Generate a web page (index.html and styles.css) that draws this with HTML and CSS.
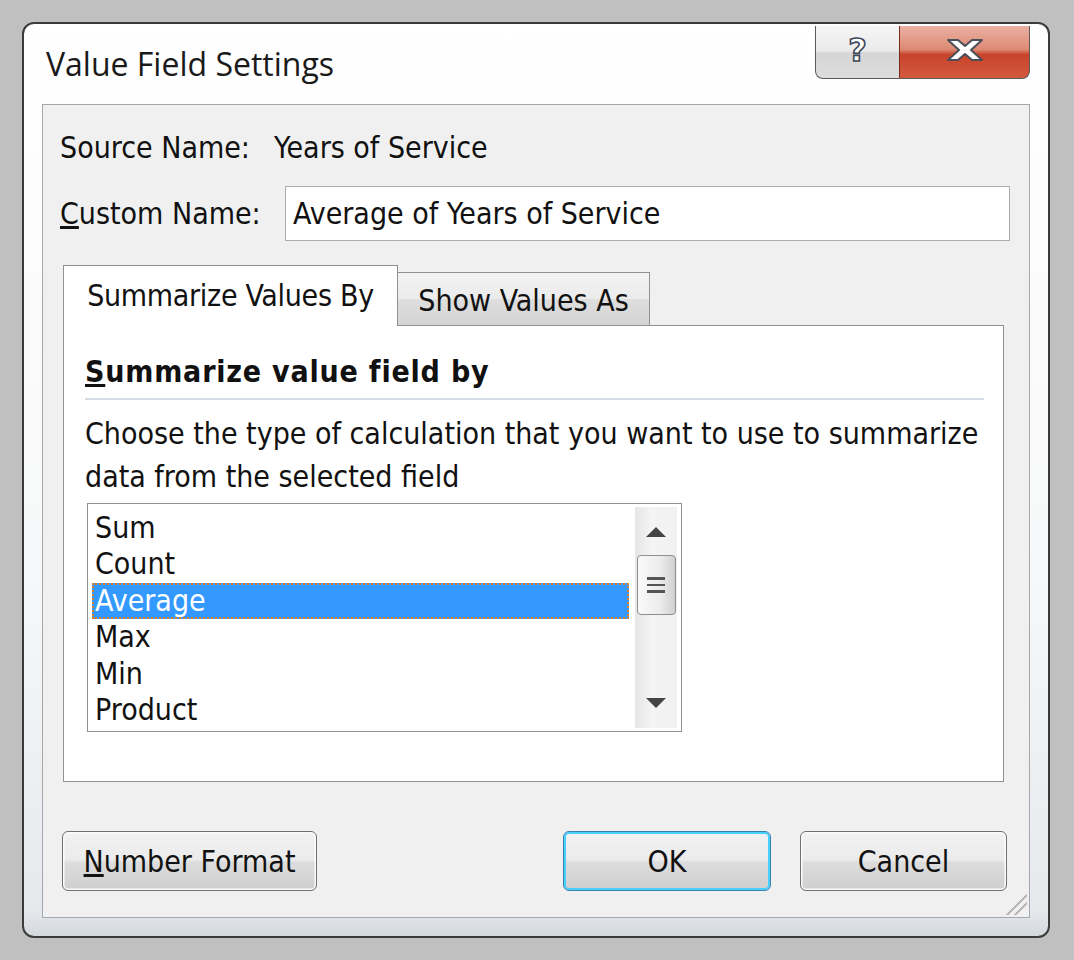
FILE: index.html
```html
<!DOCTYPE html>
<html>
<head>
<meta charset="utf-8">
<link rel="stylesheet" href="styles.css">
</head>
<body>
<div class="window">
  <div class="titlebar">
    <div class="title">Value Field Settings</div>
    <div class="caption">
      <div class="cap-btn help"><span class="help-glyph">?</span></div>
      <div class="cap-btn close">
        <svg width="44" height="26" viewBox="0 0 44 26"><path d="M5 3 L15 3 L22 9 L29 3 L39 3 L28 13 L39 23 L29 23 L22 17 L15 23 L5 23 L16 13 Z" fill="#ffffff" stroke="#4a4f5a" stroke-width="2" stroke-linejoin="round"/></svg>
      </div>
    </div>
  </div>
  <div class="client">
    <div class="row row-source">
      <span class="lbl lbl-source">Source Name:</span>
      <span class="val">Years of Service</span>
    </div>
    <div class="row row-custom">
      <span class="lbl lbl-custom"><u>C</u>ustom Name:</span>
      <div class="textbox">Average of Years of Service</div>
    </div>
    <div class="tabs">
      <div class="tab active">Summarize Values By</div>
      <div class="tab inactive">Show Values As</div>
    </div>
    <div class="panel">
      <div class="group-title"><u>S</u>ummarize value field by</div>
      <div class="sep"></div>
      <div class="desc">Choose the type of calculation that you want to use to summarize<br>data from the selected field</div>
      <div class="listbox">
        <div class="items">
          <div class="item">Sum</div>
          <div class="item">Count</div>
          <div class="item selected">Average</div>
          <div class="item">Max</div>
          <div class="item">Min</div>
          <div class="item">Product</div>
        </div>
        <div class="scrollbar">
          <div class="arrow up"></div>
          <div class="thumb"><span></span><span></span><span></span></div>
          <div class="track"></div>
          <div class="arrow down"></div>
        </div>
      </div>
    </div>
    <div class="buttons">
      <div class="btn btn-numfmt"><u>N</u>umber Format</div>
      <div class="spacer"></div>
      <div class="btn btn-ok">OK</div>
      <div class="btn btn-cancel">Cancel</div>
    </div>
    <div class="grip"></div>
  </div>
</div>
</body>
</html>
```
FILE: styles.css
```css
* { box-sizing: border-box; }
html, body { margin: 0; padding: 0; }
body {
  width: 1074px;
  height: 960px;
  background: #c0c0c0;
  padding: 22px 0 0 22px;
  font-family: "DejaVu Sans Condensed", "DejaVu Sans", sans-serif;
  font-stretch: condensed;
  color: #111;
}
.window {
  width: 1028px;
  height: 916px;
  border: 2px solid #3b3b3b;
  border-radius: 12px;
  background: linear-gradient(180deg, #ffffff 0%, #f7f8f9 60%, #e6e9ec 97%, #d4d9de 100%);
  display: flex;
  flex-direction: column;
  padding: 0 18px;
}
.titlebar {
  height: 80px;
  display: flex;
  justify-content: space-between;
  align-items: flex-start;
}
.title {
  font-family: "Open Sans", "Noto Sans", sans-serif;
  font-stretch: normal;
  font-size: 32px;
  color: #1a1a1a;
  margin-top: 18px;
  margin-left: 4px;
  letter-spacing: 0;
}
.caption {
  display: flex;
  margin-top: 2px;
  margin-right: 0px;
}
.cap-btn {
  height: 53px;
  border: 1.5px solid #5a5a5a;
  border-top: none;
  display: flex;
  align-items: center;
  justify-content: center;
}
.help {
  width: 84px;
  border-radius: 0 0 0 8px;
  border-right: none;
  background: linear-gradient(180deg, #f6f6f6 0%, #eaeaea 48%, #d6d6d6 52%, #dcdcdc 100%);
}
.help-glyph {
  font-family: "DejaVu Sans", sans-serif;
  font-stretch: normal;
  font-weight: bold;
  font-size: 32px;
  color: #fff;
  -webkit-text-stroke: 1.6px #3c4656;
  line-height: 1;
  margin-top: -4px;
}
.close {
  width: 131px;
  border-radius: 0 0 8px 0;
  border-left: 1.5px solid #7a2a1a;
  background: linear-gradient(180deg, #eab1a3 0%, #de8a74 45%, #c8432a 55%, #d35a3f 100%);
}
.close svg { margin-top: -4px; }
.client {
  flex: 1;
  margin-bottom: 18px;
  border: 1px solid #a4a8ad;
  background: #f0f0f0;
  display: flex;
  flex-direction: column;
  padding: 0 0 0 17px;
  font-size: 30px;
  position: relative;
}
.row { display: flex; align-items: center; }
.row-source { height: 40px; margin-top: 22px; }
.lbl-source { width: 214px; }
.row-custom { height: 55px; margin-top: 19px; }
.lbl-custom { width: 225px; }
.textbox {
  width: 725px;
  height: 55px;
  background: #fff;
  border: 1.5px solid #abadb3;
  padding-left: 7px;
  display: flex;
  align-items: center;
}
.tabs {
  display: flex;
  align-items: flex-end;
  margin-top: 24px;
  margin-left: 3px;
  height: 61px;
  position: relative;
  z-index: 1;
}
.tab {
  display: flex;
  align-items: center;
  justify-content: center;
  border: 1.5px solid #8e9296;
  border-bottom: none;
}
.tab.active {
  width: 335px;
  height: 61px;
  background: #fff;
  padding-bottom: 2px;
  letter-spacing: -0.3px;
}
.tab.inactive {
  width: 252px;
  height: 54px;
  border-left: none;
  background: linear-gradient(180deg, #f3f3f3 0%, #ebebeb 50%, #dedede 51%, #d4d4d4 100%);
  border-bottom: 1.5px solid #8e9296;
  padding-top: 2px;
}
.panel {
  margin-left: 3px;
  margin-top: -1px;
  width: 941px;
  height: 457px;
  background: #fff;
  border: 1.5px solid #8e9296;
  padding: 0 0 0 21px;
}
.group-title {
  font-weight: bold;
  height: 40px;
  line-height: 40px;
  margin-top: 26px;
  letter-spacing: 0.8px;
}
.sep {
  width: 899px;
  height: 2px;
  background: #d5dce6;
  margin-top: 6px;
}
.desc {
  line-height: 43px;
  margin-top: 12px;
}
.listbox {
  margin-left: 2px;
  margin-top: 5px;
  width: 595px;
  height: 229px;
  border: 1.5px solid #8e9296;
  display: flex;
  padding: 3px 4px 3px 4px;
}
.items {
  flex: 1;
  padding-top: 3px;
}
.item {
  height: 36.4px;
  line-height: 36.4px;
  padding-left: 3px;
}
.item.selected {
  background: #3399ff;
  color: #fff;
  outline: 2px dotted #d9822b;
  outline-offset: -2px;
  margin-right: 6px;
}
.scrollbar {
  width: 42px;
  display: flex;
  flex-direction: column;
  align-items: center;
  background: linear-gradient(90deg, #e6e6e6 0%, #f4f4f4 40%, #f0f0f0 100%);
}
.arrow {
  width: 0; height: 0;
  border-left: 10px solid transparent;
  border-right: 10px solid transparent;
}
.arrow.up { border-bottom: 10px solid #444; margin-top: 20px; }
.arrow.down { border-top: 10px solid #444; margin-bottom: 20px; }
.thumb {
  margin-top: 18px;
  width: 39px;
  height: 60px;
  border: 1.5px solid #8f8f8f;
  border-radius: 4px;
  background: linear-gradient(90deg, #fafafa 0%, #ececec 60%, #d0d0d0 100%);
  display: flex;
  flex-direction: column;
  align-items: center;
  justify-content: center;
  gap: 4px;
}
.thumb span {
  width: 18px;
  height: 2.5px;
  background: #555;
}
.track { flex: 1; }
.buttons {
  display: flex;
  margin-top: 49px;
  margin-left: 2px;
  padding-right: 22px;
  gap: 29px;
}
.spacer { flex: 1; }
.btn {
  height: 60px;
  border: 1.5px solid #707070;
  border-radius: 6px;
  background: linear-gradient(180deg, #f2f2f2 0%, #ebebeb 48%, #dddddd 52%, #cfcfcf 100%);
  display: flex;
  align-items: center;
  justify-content: center;
  box-shadow: inset 0 0 0 1.5px #fbfbfb;
}
.btn-numfmt { width: 255px; }
.btn-ok {
  width: 208px;
  border-color: #3c7fb1;
  box-shadow: inset 0 0 0 2px #48d1ff;
}
.btn-cancel { width: 207px; }
.grip {
  position: absolute;
  right: 2px;
  bottom: 2px;
  width: 24px;
  height: 24px;
  background: linear-gradient(135deg, transparent 55%, #b8b8b8 55%, #b8b8b8 62%, transparent 62%, transparent 72%, #b8b8b8 72%, #b8b8b8 79%, transparent 79%);
}
```
